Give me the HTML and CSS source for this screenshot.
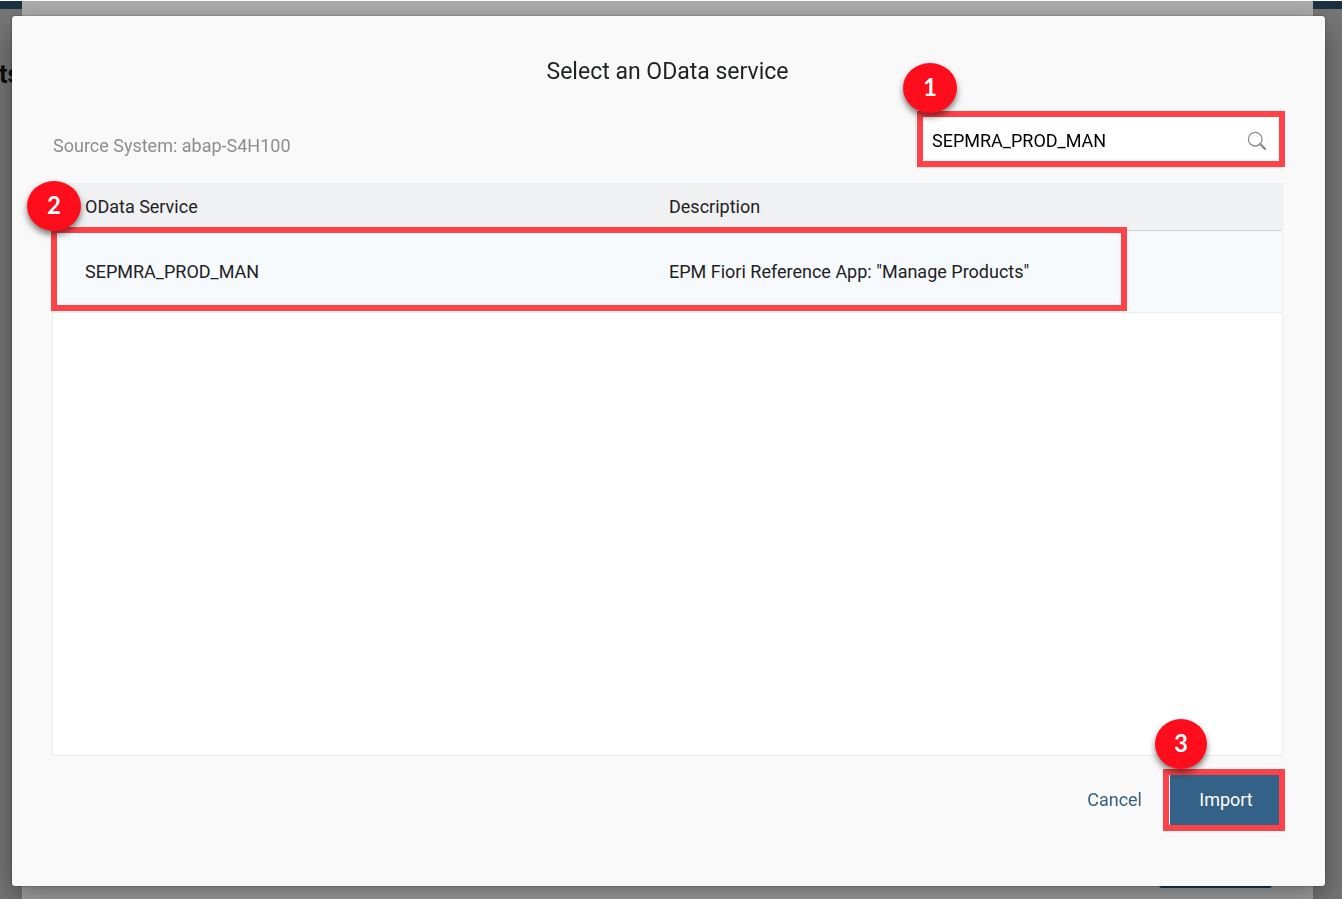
FILE: index.html
```html
<!DOCTYPE html>
<html lang="en">
<head>
<meta charset="utf-8">
<title>Select an OData service</title>
<link rel="stylesheet" href="styles.css">
</head>
<body>
<div class="backdrop">
  <div class="shellbar"></div>
  <span class="page-title">ts</span>
  <div class="sheet"><div class="sheet-button"></div></div>
</div>
<main class="dialog" role="dialog" aria-labelledby="dialog-title">
  <h1 class="dialog-title" id="dialog-title">Select an OData service</h1>
  <div class="toolbar">
    <span class="source">Source System: abap-S4H100</span>
    <form class="search">
      <input class="search-input" type="text" aria-label="Search services" value="SEPMRA_PROD_MAN">
      <button class="search-button" type="button" aria-label="Search">
        <svg width="20" height="20" viewBox="0 0 20 20" fill="none" stroke="#8c8c8c">
          <circle cx="8.2" cy="8.2" r="6.8" stroke-width="1.3"/>
          <path d="M13 13 L18 17.8" stroke-width="2.4" stroke-linecap="round"/>
        </svg>
      </button>
      <span class="frame frame-search"></span>
      <span class="step step-search">1</span>
    </form>
  </div>
  <section class="results">
    <table class="services">
      <thead>
        <tr><th class="col-service" scope="col">OData Service</th><th scope="col">Description</th></tr>
      </thead>
      <tbody>
        <tr><td>SEPMRA_PROD_MAN</td><td>EPM Fiori Reference App: "Manage Products"</td></tr>
      </tbody>
    </table>
    <span class="frame frame-row"></span>
    <span class="step step-row">2</span>
  </section>
  <footer class="actions">
    <button class="button" type="button">Cancel</button>
    <div class="confirm">
      <button class="button button-primary" type="button">Import</button>
      <span class="frame frame-import"></span>
      <span class="step step-import">3</span>
    </div>
  </footer>
</main>
</body>
</html>
```

FILE: styles.css
```css
* {
  box-sizing: border-box;
}

body {
  margin: 0;
  min-height: 100vh;
  display: flex;
  padding: 16px 17px 13px 12px;
  font-family: Roboto, "Liberation Sans", sans-serif;
  font-size: 18px;
  line-height: 24px;
  color: #1f2123;
}

.backdrop {
  position: fixed;
  inset: 0;
  background: #777;
  border-top: 1px solid #fff;
  overflow: hidden;
}

.shellbar {
  height: 8px;
  background: #1b3141;
}

.page-title {
  position: absolute;
  left: -1px;
  top: 62px;
  font-size: 25px;
  font-weight: 700;
  color: #0c0c0c;
}

.sheet {
  position: absolute;
  inset: 0 29px 0 22px;
  background: #acacac;
}

.sheet-button {
  position: absolute;
  right: 41px;
  bottom: 11px;
  width: 113px;
  height: 40px;
  border-radius: 3px;
  background: #1a3f5c;
}

.dialog {
  position: relative;
  flex: 1;
  min-width: 0;
  display: flex;
  flex-direction: column;
  padding: 40px 42px 46px 40px;
  background: #f9f9f9;
  border-radius: 3px;
  box-shadow: 0 0 2px rgba(0, 0, 0, 0.5), 0 12px 32px rgba(0, 0, 0, 0.4);
}

.dialog-title {
  margin: 0;
  font-size: 23px;
  line-height: 32px;
  font-weight: 400;
  text-align: center;
}

.toolbar {
  display: flex;
  align-items: center;
  justify-content: space-between;
  margin: 25px 0 15px;
}

.source {
  color: #8d8d8d;
  padding: 10px 0 0 1px;
}

.search {
  position: relative;
  display: flex;
  align-items: center;
  width: 368px;
  height: 55px;
  padding: 0 15px 0 16px;
  background: #fff;
  border: 1px solid #e2e2e2;
  border-radius: 3px;
}

.search-input {
  flex: 1;
  min-width: 0;
  padding: 0;
  border: 0;
  outline: 0;
  background: transparent;
  font: inherit;
  color: #000;
}

.search-button {
  display: flex;
  padding: 0;
  border: 0;
  background: transparent;
}

.results {
  position: relative;
  flex: 1;
  background: #fff;
  border: 1px solid #ededed;
  border-top: 0;
}

.services {
  width: 100%;
  border-collapse: collapse;
  table-layout: fixed;
}

.services th,
.services td {
  padding: 2px 0 0 32px;
  text-align: left;
  font-weight: 400;
}

.services .col-service {
  width: 584px;
}

.services th {
  height: 47px;
  background: #f0f1f3;
  border-bottom: 1px solid #d2d4d6;
}

.services td {
  height: 82px;
  background: #f6fafd;
  border-bottom: 1px solid #ebeef0;
}

.actions {
  display: flex;
  justify-content: flex-end;
  align-items: center;
  gap: 28px;
  padding: 19px 4px 14px 0;
}

.button {
  padding: 0 0 2px;
  border: 0;
  background: transparent;
  font: inherit;
  color: #346187;
}

.confirm {
  position: relative;
}

.button-primary {
  display: block;
  width: 109px;
  height: 51px;
  padding-left: 3px;
  background: #346187;
  color: #fff;
}

.frame {
  position: absolute;
  border: 6px solid #ff4248;
  pointer-events: none;
}

.frame-search {
  inset: -3px -3px 0 1px;
}

.frame-row {
  top: 44px;
  left: -2px;
  right: 155px;
  height: 84px;
}

.frame-import {
  inset: -6px -6px -5px -7px;
}

.step {
  position: absolute;
  display: grid;
  place-items: center;
  width: 54px;
  height: 50px;
  padding-bottom: 2px;
  border-radius: 50%;
  background: #ff0d1c;
  box-shadow: 0 4px 6px rgba(0, 0, 0, 0.5);
  color: #fff;
  font-family: Lato, "Open Sans", sans-serif;
  font-size: 24px;
  font-weight: 700;
}

.step-search {
  left: -13px;
  top: -51px;
}

.step-row {
  left: -26px;
  top: -2px;
}

.step-import {
  left: -15px;
  top: -56px;
  width: 52px;
}
```
